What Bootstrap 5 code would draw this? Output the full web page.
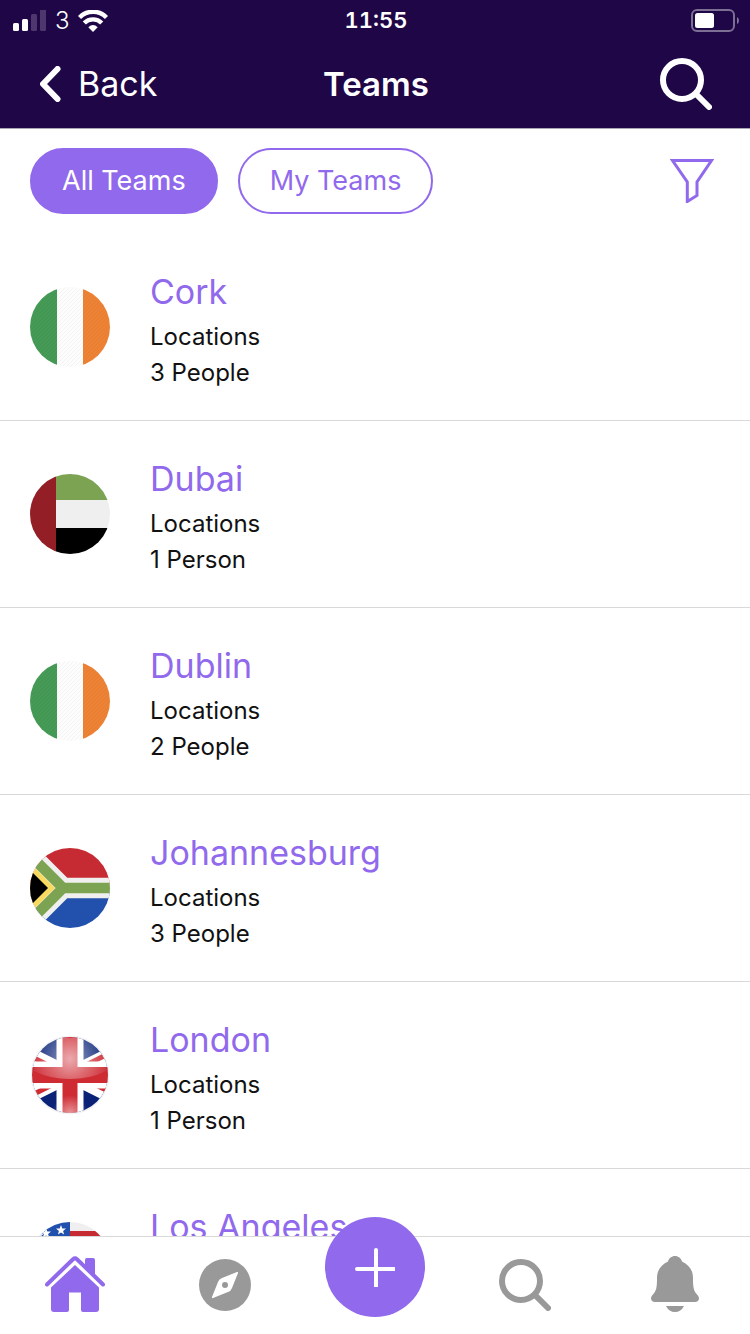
<!DOCTYPE html>
<html lang="en">
<head>
<meta charset="utf-8">
<meta name="viewport" content="width=device-width, initial-scale=1">
<title>Teams</title>
<link href="https://cdn.jsdelivr.net/npm/bootstrap@5.3.0/dist/css/bootstrap.min.css" rel="stylesheet">
<style>
  :root { --brand: #9169ec; --ink: #1f0647; --muted: #999; --line: #d9d9d9; }
  body { font-family: Inter, "Liberation Sans", sans-serif; color: #111; background: #fff; }
  svg { display: block; flex: none; }
  .app-top { background: var(--ink); color: #fff; border-bottom: 1px solid #aaa5b2; }
  .status-row { height: 40px; padding: 1px 11px 0 13px; font-size: 24px; line-height: 39px; }
  .status-row .carrier { font-weight: 300; }
  .status-row .clock { font-size: 22px; font-weight: 600; font-variant-numeric: tabular-nums; }
  .title-row { height: 88px; padding: 0 38px 0 40px; font-size: 34px; line-height: 88px; }
  .side { flex: 1 1 0; }
  .title-row a, .title-row button { color: #fff; }
  .title-row h1 { font-size: 33px; line-height: 88px; font-weight: 600; }
  .filter-row { padding: 19px 36px 20px 30px; gap: 20px; }
  .pill { --bs-btn-color: var(--brand); --bs-btn-border-color: var(--brand); --bs-btn-border-width: 2px;
    --bs-btn-hover-color: var(--brand); --bs-btn-hover-border-color: var(--brand);
    --bs-btn-active-bg: var(--brand); --bs-btn-active-color: #fff; --bs-btn-active-border-color: var(--brand);
    --bs-btn-padding-x: 30px; --bs-btn-padding-y: 13px; --bs-btn-font-size: 27px; --bs-btn-line-height: 36px; }
  .bare { background: none; border: 0; padding: 0; }
  .team-list { scrollbar-width: none; min-height: 0; }
  .team-list::-webkit-scrollbar { display: none; }
  .team-list .list-group-item { padding: 30px 30px 29px; gap: 40px; border-color: var(--line); }
  .team-text { min-height: 127px; font-size: 24px; line-height: 36px; color: #111; }
  .team-text h2 { font-size: 34px; line-height: 55px; font-weight: 400; color: var(--brand); }
  .flag { width: 80px; height: 80px; margin-top: 23px; border-radius: 50%; }
  .tab-row { height: 98px; padding-bottom: 2px; border-top: 1px solid var(--line); color: var(--muted); background: #fff; }
  .tab-row a { color: inherit; }
  .tab-row a.active { color: var(--brand); }
  .add-btn { width: 100px; height: 100px; margin-top: -36px; background: var(--brand); color: #fff; }
</style>
</head>
<body class="d-flex flex-column vh-100 overflow-hidden">
<svg width="0" height="0" class="position-absolute" aria-hidden="true">
  <defs>
    <pattern id="hatch" width="4" height="4" patternUnits="userSpaceOnUse"><path d="M-1 1L1-1M0 4L4 0M3 5L5 3" stroke="#000" stroke-opacity=".04" stroke-width="1"/></pattern>
    <radialGradient id="gloss" gradientUnits="userSpaceOnUse" cx="40" cy="24" r="38"><stop offset="0" stop-color="#fff" stop-opacity=".6"/><stop offset=".5" stop-color="#fff" stop-opacity=".3"/><stop offset="1" stop-color="#fff" stop-opacity=".05"/></radialGradient>
    <radialGradient id="glow" gradientUnits="userSpaceOnUse" cx="40" cy="78" r="18"><stop offset="0" stop-color="#fff" stop-opacity=".5"/><stop offset="1" stop-color="#fff" stop-opacity="0"/></radialGradient>
    <clipPath id="disc"><circle cx="40" cy="40" r="38"/></clipPath>
    <symbol id="search" viewBox="0 0 52 52"><g fill="none" stroke="currentColor" stroke-width="6"><circle cx="22" cy="22" r="19"/><path d="M36 36L49 49" stroke-linecap="round"/></g></symbol>
    <symbol id="ireland" viewBox="0 0 80 80"><path fill="#fdfdfd" d="M27 0h26v80H27z"/><path fill="#459a55" d="M0 0h27v80H0z"/><path fill="#ee8234" d="M53 0h27v80H53z"/><path fill="url(#hatch)" d="M0 0h80v80H0z"/></symbol>
  </defs>
</svg>

<header class="app-top">
  <div class="status-row d-flex align-items-center">
    <div class="side d-flex align-items-center">
      <svg width="34" height="22" viewBox="0 0 34 22" fill="#fff" aria-label="Signal"><rect y="13" width="6" height="8" rx="1.5"/><rect x="9" y="9" width="6" height="12" rx="1.5"/><g opacity=".2"><rect x="18" y="4" width="6" height="17" rx="1.5"/><rect x="27" y="-1" width="6" height="22" rx="1.5"/></g></svg>
      <span class="carrier ms-2 me-2">3</span>
      <svg width="30" height="22" viewBox="0 0 30 22" aria-label="Wi-Fi"><g fill="none" stroke="#fff" stroke-width="4.400"><path d="M1.500 7.500C9-.2 21-.2 28.500 7.500"/><path d="M6.300 13C11 8.200 19 8.200 23.700 13"/></g><path fill="#fff" d="M10.300 17.200Q15 13 19.700 17.200L15 22z"/></svg>
    </div>
    <span class="clock">11:55</span>
    <div class="side d-flex justify-content-end">
      <svg width="48" height="24" viewBox="0 0 48 24" aria-label="Battery"><rect x="1" y="1" width="42" height="21" rx="5" fill="none" stroke="#fff" stroke-opacity=".42" stroke-width="2"/><rect x="4" y="4" width="19" height="15" rx="2.500" fill="#fff"/><path d="M46 8q2 1 2 3.500t-2 3.500z" fill="#fff" fill-opacity=".45"/></svg>
    </div>
  </div>
  <nav class="title-row d-flex align-items-center">
    <div class="side d-flex"><a href="#" class="d-flex align-items-center text-decoration-none">
      <svg class="me-3" width="22" height="36" viewBox="0 0 22 36" fill="none" stroke="currentColor" stroke-width="6" stroke-linecap="round" stroke-linejoin="round"><path d="M17.500 3L3 18l14.500 15"/></svg>Back</a></div>
    <h1 class="m-0">Teams</h1>
    <div class="side d-flex justify-content-end"><button type="button" class="bare" aria-label="Search"><svg width="52" height="52"><use href="#search"/></svg></button></div>
  </nav>
</header>

<div class="filter-row d-flex align-items-center">
  <button type="button" class="btn pill rounded-pill active">All Teams</button>
  <button type="button" class="btn pill rounded-pill">My Teams</button>
  <button type="button" class="bare ms-auto" aria-label="Filter"><svg width="44" height="44" viewBox="0 0 44 44" fill="none" stroke="#9169ec" stroke-width="3"><path d="M2.500 1.500h39L27 23v13.500L17.300 42.500V23z"/></svg></button>
</div>

<main class="team-list list-group list-group-flush flex-grow-1 overflow-auto">
  <a href="#" class="list-group-item list-group-item-action d-flex">
    <svg class="flag"><use href="#ireland"/></svg>
    <div class="team-text"><h2 class="m-0">Cork</h2><div>Locations</div><div>3 People</div></div>
  </a>
  <a href="#" class="list-group-item list-group-item-action d-flex">
    <svg class="flag" viewBox="0 0 80 80"><path fill="#efefef" d="M0 0h80v80H0z"/><path fill="#7ba352" d="M26 0h54v26H26z"/><path d="M26 54h54v26H26z"/><path fill="#931e25" d="M0 0h26v80H0z"/></svg>
    <div class="team-text"><h2 class="m-0">Dubai</h2><div>Locations</div><div>1 Person</div></div>
  </a>
  <a href="#" class="list-group-item list-group-item-action d-flex">
    <svg class="flag"><use href="#ireland"/></svg>
    <div class="team-text"><h2 class="m-0">Dublin</h2><div>Locations</div><div>2 People</div></div>
  </a>
  <a href="#" class="list-group-item list-group-item-action d-flex">
    <svg class="flag" viewBox="0 0 80 80"><path fill="#c62a32" d="M0 0h80v40H0z"/><path fill="#2251ad" d="M0 40h80v40H0z"/><g fill="none"><path stroke="#efefef" stroke-width="20.500" d="M90 40H33L-17-10M90 40H33L-17 90"/><path stroke="#7ba352" stroke-width="10.500" d="M90 40H33L-17-10M90 40H33L-17 90"/></g><path fill="#f9da60" d="M-15 0L25 40-15 80z"/><path d="M-22 0L18 40-22 80z"/></svg>
    <div class="team-text"><h2 class="m-0">Johannesburg</h2><div>Locations</div><div>3 People</div></div>
  </a>
  <a href="#" class="list-group-item list-group-item-action d-flex">
    <svg class="flag" viewBox="0 0 80 80"><circle cx="40" cy="40" r="39.500" fill="#f3f3f3"/><g clip-path="url(#disc)"><path fill="#0a2377" d="M0 0h80v80H0z"/><path stroke="#fff" stroke-width="15" d="M0 20l80 40M0 60l80-40"/><g stroke="#ce2b33" stroke-width="5"><path d="M0 21l30 15M50 42l30 15M0 61l30-15M50 33l30-15"/></g><path fill="#fff" d="M26.500 0h27v80h-27zM0 26.500h80v27H0z"/><path fill="#ce2b33" d="M32.500 2h15v76h-15zM0 32h80v16H0z"/><path fill="url(#gloss)" d="M4 3h72v33Q60 44 40 44T4 36z"/><path fill="url(#glow)" d="M15 55h50v25H15z"/></g></svg>
    <div class="team-text"><h2 class="m-0">London</h2><div>Locations</div><div>1 Person</div></div>
  </a>
  <a href="#" class="list-group-item list-group-item-action d-flex">
    <svg class="flag" viewBox="0 0 80 80"><path fill="#efefef" d="M0 0h80v80H0z"/><path fill="#c62a32" d="M40 9h40v9H40z"/><path fill="#2251ad" d="M0 0h40v40H0z"/><g fill="#fff"><path id="star" d="M31 3l1.300 3.500 3.700.1-2.900 2.300 1 3.600L31 10.400l-3.100 2.100 1-3.600L26 6.600l3.700-.1z"/><use href="#star" x="-15" y="3"/><use href="#star" x="-22" y="5"/></g></svg>
    <div class="team-text"><h2 class="m-0">Los Angeles</h2></div>
  </a>
</main>

<nav class="tab-row row g-0 row-cols-5 flex-shrink-0 position-relative" aria-label="Main">
  <a href="#" class="col active d-flex justify-content-center align-items-center" aria-label="Home"><svg width="60" height="57" viewBox="0 0 60 57" fill="currentColor"><path d="M2 28.500L28 3.200Q30 1.500 32 3.200L58 28.500" fill="none" stroke="currentColor" stroke-width="4" stroke-linecap="round"/><path d="M40 10V4q0-2 2-2h6q2 0 2 2v16z"/><path d="M30 9L54 31.500V53q0 3-3 3H38q-2 0-2-2V36.500H24V54q0 2-2 2H9q-3 0-3-3V31.500z"/></svg></a>
  <a href="#" class="col d-flex justify-content-center align-items-center" aria-label="Explore"><svg width="52" height="52" viewBox="0 0 52 52"><circle cx="26" cy="26" r="26" fill="currentColor"/><path fill="#fff" d="M38 13q1.500-.5 1 1L33 29q-1 3-4 4L14 39q-1.500.5-1-1L19 23q1-3 4-4z"/><circle cx="26" cy="26" r="3" fill="currentColor"/></svg></a>
  <div class="col d-flex justify-content-center align-items-center"><button type="button" class="add-btn btn rounded-circle p-0 d-flex justify-content-center align-items-center" aria-label="Add"><svg width="40" height="40" viewBox="0 0 40 40" stroke="currentColor" stroke-width="4" stroke-linecap="round"><path d="M2 22h37M21 3v36"/></svg></button></div>
  <a href="#" class="col d-flex justify-content-center align-items-center" aria-label="Search"><svg width="52" height="52"><use href="#search"/></svg></a>
  <a href="#" class="col d-flex justify-content-center align-items-center" aria-label="Notifications"><svg width="48" height="57" viewBox="0 0 48 57" fill="currentColor"><path d="M24 0c3.500 0 6 2.300 7 5.500C38 9 42 14 42 22c0 9 .5 13 4.500 17C49.500 42.500 47.500 46 44 46H4C.5 46-1.500 42.500 1.500 39 5.500 35 6 31 6 22 6 14 10 9 17 5.500 18 2.300 20.500 0 24 0zM15 50h18q-3 6-9 6t-9-6z"/></svg></a>
</nav>
<script src="https://cdn.jsdelivr.net/npm/bootstrap@5.3.0/dist/js/bootstrap.bundle.min.js"></script>
</body>
</html>
